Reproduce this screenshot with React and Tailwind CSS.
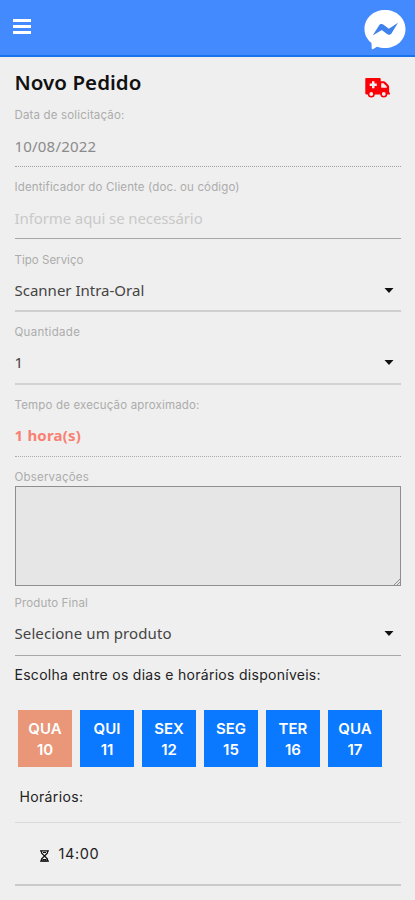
const dias = [
    { nome: "QUA", dia: 10, ativo: true },
    { nome: "QUI", dia: 11 },
    { nome: "SEX", dia: 12 },
    { nome: "SEG", dia: 15 },
    { nome: "TER", dia: 16 },
    { nome: "QUA", dia: 17 },
];

const Rotulo = ({ children, className }) => (
    <div className={`h-[18px] text-[11.5px] leading-[19px] text-[#acacac] font-['Inter',sans-serif] whitespace-nowrap ${className}`}>
        {children}
    </div>
);

const Seta = () => (
    <svg viewBox="0 0 10 5" className="w-[10px] h-[5px] mr-[7px]">
        <path d="M0.5 0h9L5 5z" fill="#111" />
    </svg>
);

const Messenger = () => (
    <svg viewBox="0 0 42 40" className="w-[42px] h-[40px] mt-[10px]">
        <path d="M21 0C9.500 0 0.500 8 0.500 19c0 6 2.700 10.500 7 14l0.200 5.200c0 0.900 0.900 1.300 1.600 0.800l3.700-2.300C15.500 37.600 18 38 21 38c11.500 0 20.500-8 20.500-19S32.500 0 21 0z" fill="#fff" />
        <path d="M8.700 25.500L15 15.500c1-1.600 3.100-1.900 4.600-0.800l4.600 3.500c0.400 0.300 1 0.300 1.400 0L34 12.700 27.600 23.200c-1 1.600-3.100 2-4.600 0.800l-4.600-3.500c-0.400-0.300-1-0.300-1.400 0z" fill="#3f82ee" />
    </svg>
);

const Ambulancia = () => (
    <svg viewBox="0 0 25 20" className="w-[25px] h-[20px] mt-[20.5px]">
        <path d="M1.300 0H14.500c0.700 0 1.200 0.500 1.200 1.200V3.200h3c0.700 0 1.200 0.200 1.700 0.700l2.900 3c0.500 0.500 0.800 1.100 0.800 1.800v5.800h0.800V16.500H1.300C0.600 16.500 0.300 16 0.300 15.300V1.200C0.300 0.500 0.700 0 1.300 0z" fill="#fb0007" />
        <path d="M7 3.200h2.500v2.300h2.300v2.500h-2.300v2.300H7v-2.300H4.700V5.500H7zM16.200 5.200h2.300L21.800 8.600v1.200h-5.600z" fill="#efefef" />
        <circle cx="6.300" cy="16" r="2.700" fill="#efefef" stroke="#fb0007" strokeWidth="1.600" />
        <circle cx="18.800" cy="16" r="2.700" fill="#efefef" stroke="#fb0007" strokeWidth="1.600" />
    </svg>
);

const Header = () => (
    <header className="flex justify-between h-[57px] bg-[#448aff] border-b-2 border-[#1a73ee] pl-[13px] pr-[9px]">
        <button className="flex flex-col gap-[3px] pt-[18.5px]" aria-label="Menu">
            <span className="block w-[18px] h-[3px] bg-white" />
            <span className="block w-[18px] h-[3px] bg-white" />
            <span className="block w-[18px] h-[3px] bg-white" />
        </button>
        <Messenger />
    </header>
);

const App = () => {
    return (
        <div className="w-[415px] h-[900px] overflow-hidden bg-[#efefef] font-['Noto_Sans',sans-serif] text-[#444]">
            <Header />
            <main className="px-[14.5px]">
                <div className="flex justify-between h-[49px] pr-[11px]">
                    <h1 className="pt-[10px] text-[20.5px] leading-[30px] font-semibold text-[#111] tracking-[0.05px]">Novo Pedido</h1>
                    <Ambulancia />
                </div>

                <div className="h-[72px]">
                    <Rotulo className="tracking-[0.16px]">Data de solicitação:</Rotulo>
                    <div className="flex items-center h-[43px] pt-[2px] border-b border-dotted border-[#a0a0a0] text-[15px] tracking-[0.2px] text-[#8b8b8b]">10/08/2022</div>
                </div>
                <div className="h-[73px]">
                    <Rotulo className="tracking-[0.14px]">Identificador do Cliente (doc. ou código)</Rotulo>
                    <div className="flex items-center h-[43px] pt-[2px] border-b border-[#a8a8a8] text-[15px] tracking-[-0.1px] text-[#c9c9c9]">Informe aqui se necessário</div>
                </div>
                <div className="h-[72px]">
                    <Rotulo className="tracking-[0.02px]">Tipo Serviço</Rotulo>
                    <div className="flex items-center justify-between h-[43px] pt-[2px] border-b-2 border-[#cfcfcf] text-[15px]">
                        Scanner Intra-Oral
                        <Seta />
                    </div>
                </div>
                <div className="h-[73px]">
                    <Rotulo className="tracking-[0.3px]">Quantidade</Rotulo>
                    <div className="flex items-center justify-between h-[44px] pt-[1px] border-b-2 border-[#d3d3d3] text-[15px]">
                        1
                        <Seta />
                    </div>
                </div>
                <div className="h-[72px]">
                    <Rotulo className="tracking-[0.16px]">Tempo de execução aproximado:</Rotulo>
                    <div className="flex items-center h-[43px] pt-[1px] border-b border-dotted border-[#aaa] text-[15px] tracking-[0.2px] font-bold text-[#fa7f72]">1 hora(s)</div>
                </div>
                <div className="h-[126px]">
                    <Rotulo className="tracking-[0.2px]">Observações</Rotulo>
                    <div className="flex items-end justify-end h-[100px] bg-[#e6e6e6] border border-[#8f8f8f]">
                        <svg viewBox="0 0 6 6" className="w-[6px] h-[6px]">
                            <path d="M0 6L6 0M3 6l3-3" stroke="#777" strokeWidth="0.8" />
                        </svg>
                    </div>
                </div>
                <div className="h-[70px]">
                    <Rotulo className="tracking-[0.14px]">Produto Final</Rotulo>
                    <div className="flex items-center justify-between h-[44px] border-b border-[#a8a8a8] text-[15px] tracking-[0.1px]">
                        Selecione um produto
                        <Seta />
                    </div>
                </div>

                <p className="h-[46px] text-[14px] leading-[22px] tracking-[0.28px] text-[#222] font-['Inter',sans-serif] whitespace-nowrap">
                    Escolha entre os dias e horários disponíveis:
                </p>

                <div className="flex gap-[8px] pl-[3.5px]">
                    {dias.map((d) => (
                        <div
                            key={d.dia}
                            className={`flex flex-col items-center justify-center w-[54px] h-[57px] text-[15px] leading-[21px] font-semibold text-white font-['Inter',sans-serif] ${d.ativo ? "bg-[#e99679]" : "bg-[#0a79ff]"}`}
                        >
                            <span>{d.nome}</span>
                            <span>{d.dia}</span>
                        </div>
                    ))}
                </div>

                <div className="h-[56px] pt-[19px] pl-[5px] border-b border-[#d9d9d9] text-[14px] leading-[22px] tracking-[0.35px] text-[#222] font-['Inter',sans-serif]">
                    Horários:
                </div>
                <div className="flex items-center h-[63px] pt-[1px] pl-[25px] border-b-2 border-[#cacaca] text-[14.5px] tracking-[0.6px] text-[#222] font-['Inter',sans-serif]">
                    <svg viewBox="0 0 9 12" className="w-[9px] h-[12px] mt-[3px] mr-[10px]" fill="none" stroke="#111" strokeWidth="1.2">
                        <path d="M0 0.8h9M0 11.2h9M1.500 1v2l3 3-3 3v2M7.500 1v2l-3 3 3 3v2" />
                        <path d="M3 9.500h3v1.500H3zM3 2.500h3" />
                    </svg>
                    14:00
                </div>
            </main>
        </div>
    );
};

export default App;
